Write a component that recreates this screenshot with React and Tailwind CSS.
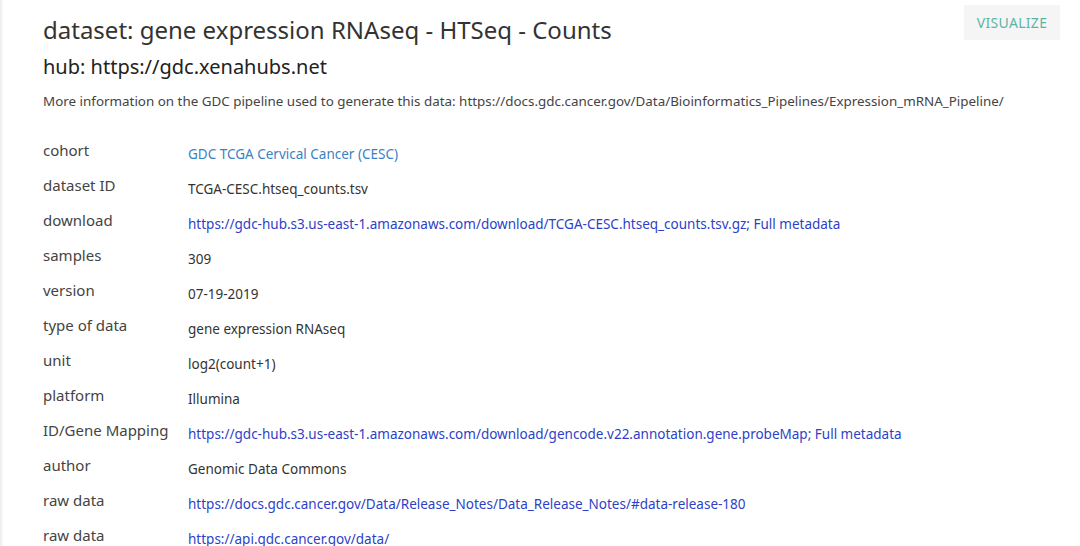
import React from 'react';

const rows = [
  { label: 'cohort', value: 'GDC TCGA Cervical Cancer (CESC)', kind: 'cohort' },
  { label: 'dataset ID', value: 'TCGA-CESC.htseq_counts.tsv' },
  {
    label: 'download',
    value: 'https://gdc-hub.s3.us-east-1.amazonaws.com/download/TCGA-CESC.htseq_counts.tsv.gz',
    kind: 'link',
    meta: true,
  },
  { label: 'samples', value: '309' },
  { label: 'version', value: '07-19-2019' },
  { label: 'type of data', value: 'gene expression RNAseq' },
  { label: 'unit', value: 'log2(count+1)' },
  { label: 'platform', value: 'Illumina' },
  {
    label: 'ID/Gene Mapping',
    value: 'https://gdc-hub.s3.us-east-1.amazonaws.com/download/gencode.v22.annotation.gene.probeMap',
    kind: 'link',
    meta: true,
  },
  { label: 'author', value: 'Genomic Data Commons' },
  {
    label: 'raw data',
    value: 'https://docs.gdc.cancer.gov/Data/Release_Notes/Data_Release_Notes/#data-release-180',
    kind: 'link',
  },
  { label: 'raw data', value: 'https://api.gdc.cancer.gov/data/', kind: 'link' },
];

const Value = ({ row }) => {
  if (row.kind === 'cohort') {
    return <a className="text-[#3b7fc4]">{row.value}</a>;
  }
  if (row.kind === 'link') {
    return (
      <span className="text-[#2e3fc7]">
        <a>{row.value}</a>
        {row.meta && (
          <>
            ; <a>Full metadata</a>
          </>
        )}
      </span>
    );
  }
  return <span>{row.value}</span>;
};

export default function App() {
  return (
    <div className="h-[546px] w-[1080px] overflow-hidden bg-white font-['Noto_Sans','Open_Sans',sans-serif] text-[#333]">
      <div className="relative h-full shadow-[inset_4px_0_3px_-2px_rgba(0,0,0,0.08)] pl-[43px] pt-[14px]">
        <button className="absolute right-[20px] top-[5px] h-[35px] w-[96px] bg-[#f5f5f5] text-[14px] tracking-[0.3px] text-[#5bb5a6]">
          VISUALIZE
        </button>

        <h1 className="text-[24px] leading-[32px] text-[#333]">
          dataset: gene expression RNAseq - HTSeq - Counts
        </h1>
        <h2 className="mt-[7px] text-[20px] leading-[28px] text-[#222]">hub: https://gdc.xenahubs.net</h2>
        <p className="mt-[11px] text-[13.4px] leading-[18px] text-[#444]">
          More information on the GDC pipeline used to generate this data:
          https://docs.gdc.cancer.gov/Data/Bioinformatics_Pipelines/Expression_mRNA_Pipeline/
        </p>

        <div className="mt-[29px] flex flex-col">
          {rows.map((row, i) => (
            <div key={i} className="flex h-[35px] items-start">
              <div className="w-[145px] shrink-0 text-[15px] leading-[22px] text-[#444]">{row.label}</div>
              <div className="pt-[5px] text-[13.5px] leading-[20px] text-[#333]">
                <Value row={row} />
              </div>
            </div>
          ))}
        </div>
      </div>
    </div>
  );
}
